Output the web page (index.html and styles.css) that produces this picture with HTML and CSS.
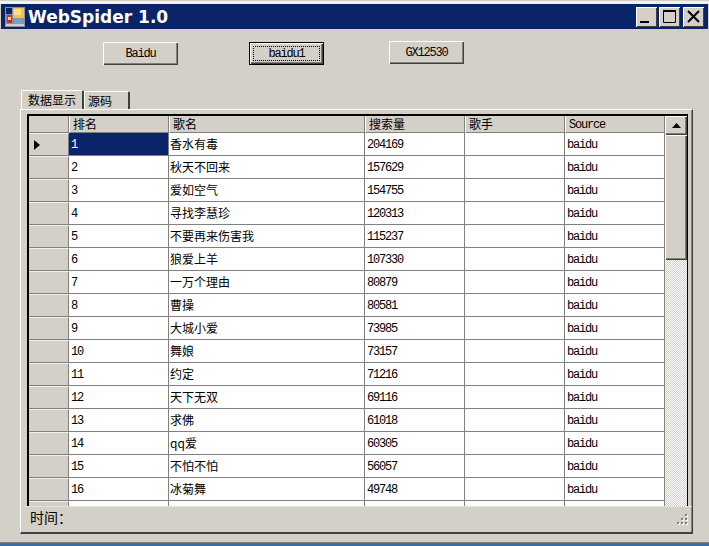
FILE: index.html
```html
<!DOCTYPE html>
<html lang="zh">
<head>
<meta charset="utf-8">
<title>WebSpider 1.0</title>
<link rel="stylesheet" href="styles.css">
</head>
<body>
<div class="window">
  <div class="titlebar">
    <svg class="app-icon" width="20" height="20" viewBox="0 0 20 20">
      <rect x="0" y="0" width="20" height="20" fill="#8f8f98"/>
      <rect x="1" y="1" width="6" height="6" fill="#0a246a"/>
      <rect x="8" y="1" width="11" height="10" fill="#f4c23c"/>
      <rect x="9" y="2" width="7" height="6" fill="#fbe08a"/>
      <rect x="2" y="8" width="5" height="8" fill="#c9302a"/>
      <rect x="3" y="10" width="3" height="3" fill="#f2c9b0"/>
      <rect x="9" y="12" width="9" height="5" fill="#6f9fe0"/>
      <rect x="1" y="17" width="18" height="2" fill="#d4d0c8"/>
    </svg>
    <span class="title">WebSpider 1.0</span>
    <div class="caption-buttons">
      <div class="cap-btn"><svg width="21" height="20" viewBox="0 0 21 20"><rect x="4" y="14" width="9" height="2" fill="#000"/></svg></div>
      <div class="cap-btn"><svg width="21" height="20" viewBox="0 0 21 20"><path d="M4.5 3.5h12v12h-12z" fill="none" stroke="#000"/><rect x="4" y="3" width="13" height="2" fill="#000"/></svg></div>
      <div class="cap-btn cap-close"><svg width="21" height="20" viewBox="0 0 21 20"><path d="M5 4l11 11M16 4L5 15" fill="none" stroke="#000" stroke-width="2"/></svg></div>
    </div>
  </div>

  <div class="toolbar">
    <button class="btn btn-baidu">Baidu</button>
    <button class="btn btn-focus"><span class="focus-ring">baidu1</span></button>
    <button class="btn btn-gx">GX12530</button>
  </div>

  <div class="tabs">
    <div class="tab tab-active">数据显示</div>
    <div class="tab tab-idle">源码</div>
  </div>

  <div class="panel">
    <div class="grid">
      <table class="table">
        <colgroup>
          <col class="c-head"><col class="c-s"><col class="c-l"><col class="c-s"><col class="c-s"><col class="c-s">
        </colgroup>
        <thead>
          <tr><th class="corner"></th><th>排名</th><th>歌名</th><th>搜索量</th><th>歌手</th><th class="src">Source</th></tr>
        </thead>
        <tbody>
          <tr><td class="rh"><svg class="marker" width="6" height="10" viewBox="0 0 6 10"><path d="M0 0l6 5-6 5z" fill="#000"/></svg></td><td class="sel">1</td><td>香水有毒</td><td>204169</td><td></td><td>baidu</td></tr>
          <tr><td class="rh"></td><td>2</td><td>秋天不回来</td><td>157629</td><td></td><td>baidu</td></tr>
          <tr><td class="rh"></td><td>3</td><td>爱如空气</td><td>154755</td><td></td><td>baidu</td></tr>
          <tr><td class="rh"></td><td>4</td><td>寻找李慧珍</td><td>120313</td><td></td><td>baidu</td></tr>
          <tr><td class="rh"></td><td>5</td><td>不要再来伤害我</td><td>115237</td><td></td><td>baidu</td></tr>
          <tr><td class="rh"></td><td>6</td><td>狼爱上羊</td><td>107330</td><td></td><td>baidu</td></tr>
          <tr><td class="rh"></td><td>7</td><td>一万个理由</td><td>80879</td><td></td><td>baidu</td></tr>
          <tr><td class="rh"></td><td>8</td><td>曹操</td><td>80581</td><td></td><td>baidu</td></tr>
          <tr><td class="rh"></td><td>9</td><td>大城小爱</td><td>73985</td><td></td><td>baidu</td></tr>
          <tr><td class="rh"></td><td>10</td><td>舞娘</td><td>73157</td><td></td><td>baidu</td></tr>
          <tr><td class="rh"></td><td>11</td><td>约定</td><td>71216</td><td></td><td>baidu</td></tr>
          <tr><td class="rh"></td><td>12</td><td>天下无双</td><td>69116</td><td></td><td>baidu</td></tr>
          <tr><td class="rh"></td><td>13</td><td>求佛</td><td>61018</td><td></td><td>baidu</td></tr>
          <tr><td class="rh"></td><td>14</td><td>qq爱</td><td>60305</td><td></td><td>baidu</td></tr>
          <tr><td class="rh"></td><td>15</td><td>不怕不怕</td><td>56057</td><td></td><td>baidu</td></tr>
          <tr><td class="rh"></td><td>16</td><td>冰菊舞</td><td>49748</td><td></td><td>baidu</td></tr>
          <tr><td class="rh"></td><td></td><td></td><td></td><td></td><td></td></tr>
        </tbody>
      </table>
      <div class="scrollbar">
        <div class="sb-up"><svg width="9" height="5" viewBox="0 0 9 5"><path d="M4.5 0L9 5H0z" fill="#000"/></svg></div>
        <div class="sb-thumb"></div>
        <div class="sb-track"></div>
      </div>
    </div>
    <div class="status">
      <span class="status-label">时间：</span>
      <svg class="grip" width="12" height="12" viewBox="0 0 12 12">
        <path d="M9 1h2v2H9zM5 5h2v2H5zM9 5h2v2H9zM1 9h2v2H1zM5 9h2v2H5zM9 9h2v2H9z" fill="#fff" transform="translate(1 1)"/>
        <path d="M9 1h2v2H9zM5 5h2v2H5zM9 5h2v2H9zM1 9h2v2H1zM5 9h2v2H5zM9 9h2v2H9z" fill="#808080"/>
      </svg>
    </div>
  </div>
  <div class="desktop"></div>
</div>
</body>
</html>
```

FILE: styles.css
```css
* { box-sizing: border-box; }

html, body {
  margin: 0;
  padding: 0;
  background: #d4d0c8;
}

body {
  width: 709px;
  height: 546px;
  overflow: hidden;
  font-family: "Liberation Mono", "Noto Sans CJK SC", monospace;
  font-size: 12px;
  letter-spacing: -1.2px;
  color: #000;
}

.window {
  display: flex;
  flex-direction: column;
  height: 546px;
  padding-top: 1px;
  background: #d4d0c8;
}

.titlebar {
  display: flex;
  align-items: center;
  flex: none;
  height: 28px;
  padding: 0 5px;
  border-top: 3px solid #f2f1ed;
  background: #0a246a;
  box-shadow: inset 1px 0 0 #d4d0c8, inset -1px 0 0 #d4d0c8;
}

.app-icon { flex: none; }

.title {
  margin-left: 3px;
  font-family: "DejaVu Sans", sans-serif;
  font-weight: 700;
  font-size: 17px;
  letter-spacing: 0;
  color: #fff;
}

.caption-buttons {
  display: flex;
  margin-left: auto;
  gap: 2px;
}

.cap-btn {
  width: 21px;
  height: 20px;
  background: #d4d0c8;
  box-shadow: inset 1px 1px 0 #fff, inset -1px -1px 0 #404040;
}

.cap-btn svg { display: block; }
.cap-close { margin-left: 1px; }

.toolbar {
  display: flex;
  align-items: flex-start;
  flex: none;
  height: 61px;
  padding: 13px 0 0 103px;
}

.btn {
  width: 75px;
  height: 23px;
  padding: 0;
  border: 0;
  background: #d4d0c8;
  font: inherit;
  letter-spacing: inherit;
  color: #000;
  box-shadow: inset 1px 1px 0 #fff, inset -1px -1px 0 #404040, inset -2px -2px 0 #808080;
}

.btn-focus {
  display: flex;
  width: 73px;
  height: 21px;
  padding: 3px;
  margin: 1px 0 0 72px;
  box-shadow: 0 0 0 1px #000, inset 1px 1px 0 #fff, inset -1px -1px 0 #404040, inset -2px -2px 0 #808080;
}

.focus-ring {
  flex: 1;
  display: flex;
  align-items: center;
  justify-content: center;
  border: 1px dotted #000;
}

.btn-gx {
  margin-left: 66px;
  margin-top: -1px;
}

.tabs {
  display: flex;
  align-items: flex-end;
  flex: none;
  height: 19px;
  padding-left: 21px;
  font-family: "Noto Sans CJK SC", sans-serif;
  font-size: 12px;
  letter-spacing: 0;
}

.tab {
  display: flex;
  align-items: center;
  border-top: 1px solid #fff;
  border-left: 1px solid #fff;
  border-right: 2px solid #404040;
  border-radius: 2px 2px 0 0;
}

.tab-active {
  justify-content: center;
  width: 63px;
  height: 19px;
  padding-bottom: 1px;
}

.tab-idle {
  width: 46px;
  height: 18px;
  padding-left: 3px;
}

.panel {
  position: relative;
  display: flex;
  flex-direction: column;
  flex: none;
  width: 673px;
  height: 425px;
  margin-left: 20px;
  padding: 4px 0 0 6px;
  border-top: 1px solid #fff;
  border-left: 1px solid #fff;
  border-right: 1px solid #404040;
  border-bottom: 2px solid #404040;
  box-shadow: inset -1px 0 0 #808080;
}

.grid {
  display: flex;
  flex: none;
  width: 661px;
  height: 392px;
  overflow: hidden;
  border-top: 2px solid #000;
  border-left: 2px solid #000;
  border-right: 1px solid #000;
  background: #d4d0c8;
}

.table {
  flex: none;
  width: 636px;
  table-layout: fixed;
  border-collapse: separate;
  border-spacing: 0;
  align-self: flex-start;
}

.c-head { width: 40px; }
.c-s { width: 100px; }
.c-l { width: 196px; }

th {
  height: 17px;
  padding: 0 0 0 3px;
  font-family: "Noto Sans CJK SC", sans-serif;
  font-size: 12px;
  font-weight: 400;
  line-height: 14px;
  letter-spacing: 0;
  text-align: left;
  background: #d4d0c8;
  border-bottom: 1px solid #808080;
  border-right: 1px solid #808080;
  border-left: 1px solid #fff;
}

th.src {
  padding-top: 1px;
  font-family: "Liberation Mono", monospace;
  font-size: 12px;
  letter-spacing: -1.2px;
}

th.corner { border-left: 0; }

td {
  height: 23px;
  padding: 1px 0 0 2px;
  overflow: hidden;
  white-space: nowrap;
  background: #fff;
  line-height: 14px;
  border-right: 1px solid #808080;
  border-bottom: 1px solid #808080;
}

td:nth-child(3) {
  padding: 0 0 0 1px;
  font-family: "Noto Sans CJK SC", sans-serif;
  font-size: 12px;
  letter-spacing: 0;
}

td.rh {
  background: #d4d0c8;
  border-top: 1px solid #f2f0ec;
  padding: 0 0 0 5px;
}

td.sel {
  background: #0a246a;
  color: #fff;
}

.marker { display: block; }

.scrollbar {
  display: flex;
  flex-direction: column;
  flex: none;
  width: 22px;
}

.sb-up {
  display: flex;
  align-items: center;
  justify-content: center;
  flex: none;
  height: 19px;
  background: #d4d0c8;
  box-shadow: inset 1px 1px 0 #fff, inset -1px -1px 0 #404040, inset -2px -2px 0 #808080;
}

.sb-thumb {
  flex: none;
  height: 125px;
  background: #d4d0c8;
  box-shadow: inset 1px 1px 0 #fff, inset -1px -1px 0 #404040, inset -2px -2px 0 #808080;
}

.sb-track {
  flex: 1;
  background: conic-gradient(#fff 25%, #d4d0c8 0 50%, #fff 0 75%, #d4d0c8 0) 0 0 / 2px 2px;
}

.status {
  display: flex;
  align-items: center;
  justify-content: space-between;
  flex: 1;
  margin-left: -3px;
  padding: 0 4px 5px 6px;
  border-top: 1px solid #e4e2dc;
}

.status-label {
  font-family: "Noto Sans CJK SC", sans-serif;
  font-size: 14px;
  letter-spacing: 0;
}

.grip {
  margin-top: 4px;
  overflow: visible;
}

.desktop {
  flex: none;
  margin-top: auto;
  height: 4px;
  border-top: 1px solid #808080;
  background: #3a6ea5;
}
```
